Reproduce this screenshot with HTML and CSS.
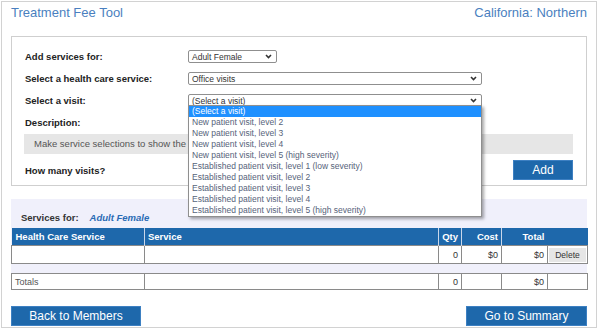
FILE: index.html
```html
<!DOCTYPE html>
<html lang="en">
<head>
    <meta charset="UTF-8">
    <title>Treatment Fee Tool</title>
    <link rel="stylesheet" href="styles.css">
</head>
<body>
    <div class="frame">
        <header class="top">
            <span class="title">Treatment Fee Tool</span>
            <span class="region">California: Northern</span>
        </header>

        <section class="panel">
            <div class="row">
                <span class="lbl">Add services for:</span>
                <div class="select select-short">
                    <span>Adult Female</span>
                    <svg class="chev" width="7" height="5" viewBox="0 0 7 5"><path d="M1 1 L3.5 3.5 L6 1" fill="none" stroke="#333" stroke-width="1.6"/></svg>
                </div>
            </div>
            <div class="row">
                <span class="lbl">Select a health care service:</span>
                <div class="select select-wide">
                    <span>Office visits</span>
                    <svg class="chev" width="7" height="5" viewBox="0 0 7 5"><path d="M1 1 L3.5 3.5 L6 1" fill="none" stroke="#333" stroke-width="1.6"/></svg>
                </div>
            </div>
            <div class="row">
                <span class="lbl">Select a visit:</span>
                <div class="select select-wide">
                    <span>(Select a visit)</span>
                    <svg class="chev" width="7" height="5" viewBox="0 0 7 5"><path d="M1 1 L3.5 3.5 L6 1" fill="none" stroke="#333" stroke-width="1.6"/></svg>
                    <ul class="options">
                        <li class="active">(Select a visit)</li>
                        <li>New patient visit, level 2</li>
                        <li>New patient visit, level 3</li>
                        <li>New patient visit, level 4</li>
                        <li>New patient visit, level 5 (high severity)</li>
                        <li>Established patient visit, level 1 (low severity)</li>
                        <li>Established patient visit, level 2</li>
                        <li>Established patient visit, level 3</li>
                        <li>Established patient visit, level 4</li>
                        <li>Established patient visit, level 5 (high severity)</li>
                    </ul>
                </div>
            </div>
            <div class="row row-desc">
                <span class="lbl">Description:</span>
            </div>
            <div class="desc">Make service selections to show the description.</div>
            <div class="row row-visits">
                <span class="lbl">How many visits?</span>
                <button class="btn btn-add">Add</button>
            </div>
        </section>

        <section class="services">
            <div class="services-title">
                <span class="lbl-inline">Services for:</span>
                <span class="member">Adult Female</span>
            </div>
            <table class="grid">
                <colgroup>
                    <col class="c-hcs"><col class="c-svc"><col class="c-qty"><col class="c-cost"><col class="c-total"><col class="c-del">
                </colgroup>
                <thead>
                    <tr>
                        <th class="first">Health Care Service</th>
                        <th>Service</th>
                        <th class="num">Qty</th>
                        <th class="num">Cost</th>
                        <th class="num">Total</th>
                        <th class="blank"></th>
                    </tr>
                </thead>
                <tbody>
                    <tr>
                        <td></td>
                        <td></td>
                        <td class="num">0</td>
                        <td class="num">$0</td>
                        <td class="num">$0</td>
                        <td class="del"><button class="btn-del">Delete</button></td>
                    </tr>
                </tbody>
            </table>
        </section>

        <table class="grid totals">
            <colgroup>
                <col class="c-hcs"><col class="c-svc"><col class="c-qty"><col class="c-cost"><col class="c-total"><col class="c-del">
            </colgroup>
            <tr>
                <td class="muted">Totals</td>
                <td></td>
                <td class="num">0</td>
                <td></td>
                <td class="num">$0</td>
                <td></td>
            </tr>
        </table>

        <div class="actions">
            <button class="btn btn-back">Back to Members</button>
            <button class="btn btn-summary">Go to Summary</button>
        </div>
    </div>
</body>
</html>
```

FILE: styles.css
```css
body {
    margin: 0;
    font-family: "Liberation Sans", Arial, sans-serif;
    color: #222;
    background: #fff;
}

.frame {
    margin: 1px 0 0 1px;
    width: 596px;
    height: 327px;
    box-sizing: border-box;
    border: 1px solid #d2d2d2;
    padding: 3px 9px 0 9px;
    display: flex;
    flex-direction: column;
}

.top {
    display: flex;
    justify-content: space-between;
    height: 15px;
    line-height: 15px;
    font-size: 13px;
    color: #4a7fc0;
    margin-bottom: 16px;
}

/* form panel */
.panel {
    border: 1px solid #cfcfcf;
    padding: 13px 13px 5px 13px;
}

.row {
    display: flex;
    align-items: center;
    height: 13px;
    margin-bottom: 9px;
}

.lbl {
    width: 163px;
    flex: none;
    font-size: 9.5px;
    font-weight: bold;
    color: #222;
}

.select {
    position: relative;
    height: 13px;
    box-sizing: border-box;
    border: 1px solid #8f8f8f;
    border-radius: 2px;
    padding: 0 4px 0 3px;
    display: flex;
    align-items: center;
    justify-content: space-between;
    font-size: 8.5px;
    color: #333;
    background: #fff;
}

.select-short { width: 89px; }
.select-wide { width: 294px; }

.options {
    position: absolute;
    top: 100%;
    left: -1px;
    width: 294px;
    margin: -1px 0 0;
    padding: 0;
    list-style: none;
    box-sizing: border-box;
    border: 1px solid #8f8f8f;
    background: #fff;
    box-shadow: 2px 2px 3px rgba(0, 0, 0, 0.35);
    z-index: 5;
}

.options li {
    height: 11px;
    line-height: 11px;
    padding-left: 3px;
    font-size: 8.5px;
    color: #56637a;
    white-space: nowrap;
}

.options li.active {
    background: #1e90ff;
    color: #fff;
}

.row-desc {
    margin-bottom: 5px;
}

.desc {
    margin-left: -1px;
    height: 20px;
    line-height: 20px;
    padding-left: 10px;
    background: #e6e6e6;
    font-size: 9.5px;
    color: #555;
    white-space: nowrap;
    overflow: hidden;
    margin-bottom: 6px;
}

.row-visits {
    height: 20px;
    margin-bottom: 0;
    justify-content: space-between;
}

.btn {
    border: 1px solid #3d80c2;
    background: #1e68ab;
    color: #fff;
    font-family: "Liberation Sans", Arial, sans-serif;
    font-size: 12px;
    padding: 0;
    cursor: pointer;
}

.btn-add {
    width: 60px;
    height: 20px;
}

/* services list */
.services {
    margin-top: 13px;
    background: #f0f0fb;
    padding-bottom: 9px;
}

.services-title {
    display: flex;
    align-items: center;
    height: 12px;
    padding: 12px 0 5px 10px;
    font-size: 9.5px;
}

.lbl-inline {
    font-weight: bold;
    color: #333;
    margin-right: 11px;
}

.member {
    font-weight: bold;
    font-style: italic;
    color: #2a6bb5;
}

.grid {
    width: 576px;
    border-collapse: collapse;
    table-layout: fixed;
    font-size: 9px;
    color: #333;
}

.c-hcs { width: 133px; }
.c-svc { width: 294px; }
.c-qty { width: 23px; }
.c-cost { width: 40px; }
.c-total { width: 46px; }
.c-del { width: 40px; }

.grid th {
    height: 17px;
    padding: 0 3px;
    background: #1e68ab;
    color: #fff;
    font-size: 9.5px;
    font-weight: bold;
    text-align: left;
    border-left: 1px solid #c9d7ea;
}

.grid th.first { padding-left: 4px; border-left: none; }
.grid th.blank { border-left: none; }

.grid td {
    height: 15px;
    padding: 0 3px;
    background: #fff;
    border: 1px solid #8a8a8a;
}

.grid .num { text-align: right; }

.grid td.del {
    padding: 1px 1px;
}

.btn-del {
    width: 100%;
    height: 14px;
    border: none;
    background: #e6e6e6;
    color: #333;
    font-family: "Liberation Sans", Arial, sans-serif;
    font-size: 8.5px;
    padding: 0;
}

.muted { color: #555; }

.actions {
    display: flex;
    justify-content: space-between;
    margin-top: 16px;
}

.btn-back {
    width: 130px;
    height: 20px;
}

.btn-summary {
    width: 121px;
    height: 20px;
}
```
